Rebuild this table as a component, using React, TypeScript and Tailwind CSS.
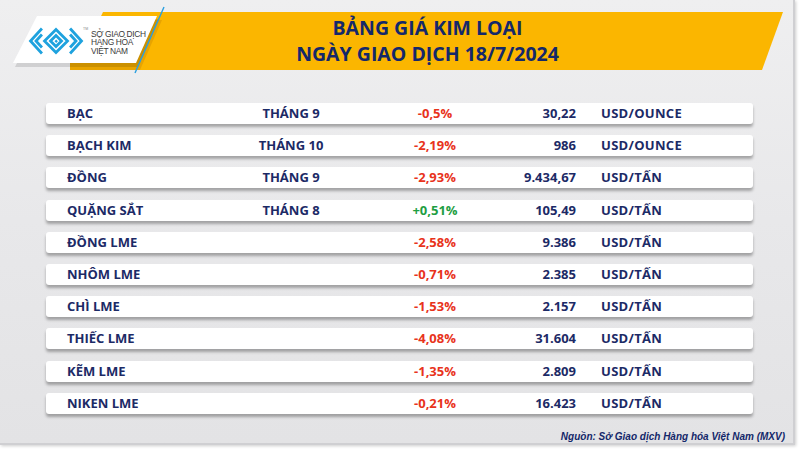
import React from "react";

type Row = { name: string; month: string; change: string; value: string; unit: string };

const rows: Row[] = [
  { name: "BẠC", month: "THÁNG 9", change: "-0,5%", value: "30,22", unit: "USD/OUNCE" },
  { name: "BẠCH KIM", month: "THÁNG 10", change: "-2,19%", value: "986", unit: "USD/OUNCE" },
  { name: "ĐỒNG", month: "THÁNG 9", change: "-2,93%", value: "9.434,67", unit: "USD/TẤN" },
  { name: "QUẶNG SẮT", month: "THÁNG 8", change: "+0,51%", value: "105,49", unit: "USD/TẤN" },
  { name: "ĐỒNG LME", month: "", change: "-2,58%", value: "9.386", unit: "USD/TẤN" },
  { name: "NHÔM LME", month: "", change: "-0,71%", value: "2.385", unit: "USD/TẤN" },
  { name: "CHÌ LME", month: "", change: "-1,53%", value: "2.157", unit: "USD/TẤN" },
  { name: "THIẾC LME", month: "", change: "-4,08%", value: "31.604", unit: "USD/TẤN" },
  { name: "KẼM LME", month: "", change: "-1,35%", value: "2.809", unit: "USD/TẤN" },
  { name: "NIKEN LME", month: "", change: "-0,21%", value: "16.423", unit: "USD/TẤN" },
];

function HeaderArt() {
  return (
    <svg className="absolute left-0 top-0" width="800" height="80" viewBox="0 0 800 80">
      <polygon points="103,12 783,12 762,70 75,70" fill="#fbb600" />
      <polygon points="70,20 162,20 140,70 70,70" fill="#e8a400" />
      <polygon points="39,19 159,19 138,67 15,67" fill="rgba(0,0,0,0.12)" />
      <polygon points="37,16 157,16 136,63 13,63" fill="#ffffff" />
      <line x1="164" y1="7" x2="135" y2="73" stroke="#2a9fe0" strokeWidth="1.4" />
      <g transform="translate(29,28)" fill="none" stroke="#1ea2de" strokeWidth="2.8" strokeLinejoin="miter" strokeLinecap="square">
        <polyline points="12,1.5 1.5,13 12,24.5" />
        <polyline points="12,7.5 7,13 12,18.5" />
        <polygon points="27,1.5 38.5,13 27,24.5 15.5,13" />
        <polygon points="27,7.5 32.5,13 27,18.5 21.5,13" />
        <polyline points="42,1.5 52.5,13 42,24.5" />
        <polyline points="42,7.5 47,13 42,18.5" />
      </g>
      <rect x="55" y="40" width="2.4" height="2.4" fill="#1ea2de" transform="rotate(45 56.2 41.2)" />
      <text x="83" y="30" fontSize="3.5" fill="#888" fontFamily="Liberation Sans">TM</text>
    </svg>
  );
}

export default function App() {
  return (
    <div className="relative w-[800px] h-[450px] bg-white overflow-hidden" style={{ fontFamily: '"Open Sans", sans-serif' }}>
      <div className="relative w-[795px] h-[445px] bg-linear-to-b from-[#efeff0] via-[#e8e8ea] to-[#e3e3e5] border-r-2 border-b-2 border-[#cfcfd2] shadow-[1px_1px_3px_rgba(0,0,0,0.2)] flex flex-col">
        <HeaderArt />
        <div className="absolute left-[91px] top-[29.5px] flex flex-col text-[8.4px] leading-[8.8px] text-[#3a3a3a] tracking-[-0.35px]" style={{ fontFamily: '"Liberation Sans", sans-serif' }}>
          <span>SỞ GIAO DỊCH</span>
          <span>HÀNG HÓA</span>
          <span>VIỆT NAM</span>
        </div>

        <div className="relative mt-[12px] h-[58px] flex flex-col items-center justify-center pl-[62px] text-[#14286a] font-bold text-[19.5px] leading-[26px]">
          <div>BẢNG GIÁ KIM LOẠI</div>
          <div>NGÀY GIAO DỊCH 18/7/2024</div>
        </div>

        <div className="relative mt-[33px] ml-[46px] w-[707px] flex flex-col gap-[11.2px]">
          {rows.map((r) => (
            <div
              key={r.name}
              className="h-[21px] bg-white rounded-[3px] shadow-[0_3px_3px_rgba(0,0,0,0.3)] grid grid-cols-[170px_108px_150px_81px_1fr] items-center pl-[21px] text-[13px] font-bold text-[#1c2a66] leading-none"
            >
              <div>{r.name}</div>
              <div className="text-center">{r.month}</div>
              <div className={`pl-[30px] text-center ${r.change.startsWith("+") ? "text-[#1e9e42]" : "text-[#e8331c]"}`}>{r.change}</div>
              <div className="text-right whitespace-nowrap">{r.value}</div>
              <div className="pl-[25px] tracking-[0.3px]">{r.unit}</div>
            </div>
          ))}
        </div>

        <div className="mt-[17px] pr-[8px] text-right text-[10px] leading-[12px] font-bold italic text-[#14286a]" style={{ fontFamily: '"Liberation Sans", sans-serif' }}>
          Nguồn: Sở Giao dịch Hàng hóa Việt Nam (MXV)
        </div>
      </div>
    </div>
  );
}
